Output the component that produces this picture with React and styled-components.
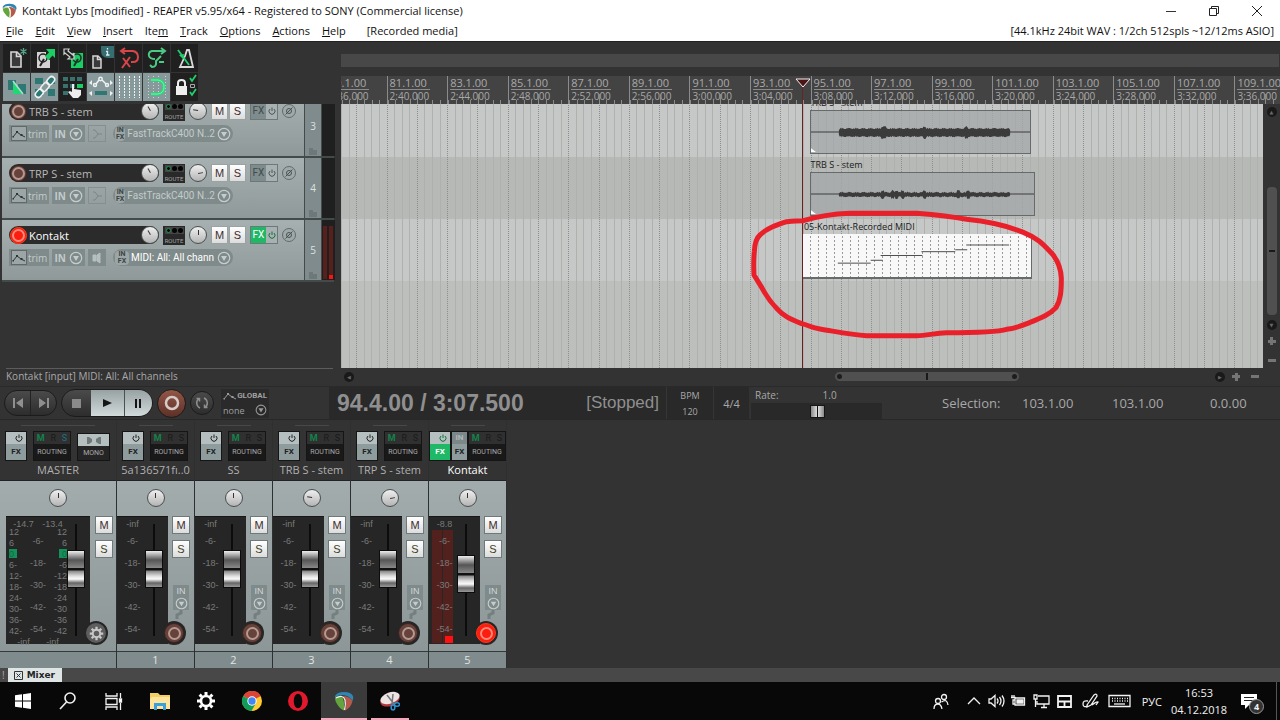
import React from 'react'
import styled, { createGlobalStyle, css } from 'styled-components'

const FIRST_BAR = 79
const BARS = 32

const toPercent = (bar) => `${((bar - FIRST_BAR) / BARS) * 100}%`
const toWidth = (bars) => `${(bars / BARS) * 100}%`

const menus = [
  ['', 'F', 'ile'], ['', 'E', 'dit'], ['', 'V', 'iew'], ['', 'I', 'nsert'], ['Ite', 'm', ''],
  ['', 'T', 'rack'], ['', 'O', 'ptions'], ['', 'A', 'ctions'], ['', 'H', 'elp'],
]

const rulerMarks = Array.from({ length: 16 }, (_, i) => {
  const seconds = 156 + i * 4
  return {
    bar: `${FIRST_BAR + i * 2}.1.00`,
    time: `${Math.floor(seconds / 60)}:${String(seconds % 60).padStart(2, '0')}.000`,
  }
})

const tracks = [
  { id: 3, name: 'TRB S - stem', input: 'FastTrackC400 N..2', pan: -80 },
  { id: 4, name: 'TRP S - stem', input: 'FastTrackC400 N..2', pan: 80 },
  { id: 5, name: 'Kontakt', input: 'MIDI: All: All chann', pan: 0, armed: true },
]

const strips = [
  { id: 1, name: '5a136571fı..0', pan: 0, peak: '-inf', fader: 65 },
  { id: 2, name: 'SS', pan: 0, peak: '-inf', fader: 65 },
  { id: 3, name: 'TRB S - stem', pan: -80, peak: '-inf', fader: 65 },
  { id: 4, name: 'TRP S - stem', pan: 80, peak: '-inf', fader: 65 },
  { id: 5, name: 'Kontakt', pan: 0, peak: '-8.8', fader: 58, armed: true },
]

const notes = [
  [35, 68, 30], [68, 80, 27], [78, 120, 22], [119, 153, 18], [153, 165, 16], [164, 207, 11],
]

function wave(seed, amp, peaks) {
  const top = []
  const bottom = []
  for (let x = 0; x <= 172; x += 1) {
    const noise = Math.abs(Math.sin(x * 1.7 + seed) * Math.cos(x * 0.43 + seed * 2))
    const peak = peaks.some((p) => Math.abs(p - x) < 2) ? 2 : 0
    const edge = x === 0 || x === 172 ? 0.5 : 1
    top.push(`${28 + x},${22 - (amp + noise * 1.6 + peak) * edge}`)
    bottom.unshift(`${28 + x},${23 + (amp + (1 - noise) * 1.4 + peak) * edge}`)
  }
  return [...top, ...bottom].join(' ')
}

/* ---------- icons ---------- */

function ReaperLogo({ size }) {
  return (
    <svg width={size} height={size} viewBox="0 0 20 20">
      <path d="M1 5Q3 1 10 1Q17 1 19 5Q20 7 18.500 10Q15 4 8 4Q4 4 1 7Z" fill="#2e86b5" />
      <path d="M1 7Q4 4 8 6Q11 10 10 19.500Q6 18 3 13Q1 10 1 7Z" fill="#63a53c" />
      <path d="M9 5Q15 5 18.500 10Q17 17 11 19.500Q12.500 10 9 5Z" fill="#b5594c" />
      <path d="M2 7Q9 3 11 9Q12 13 10.500 19" fill="none" stroke="#f0f0ea" strokeWidth="1.200" />
    </svg>
  )
}

function Power({ color = '#222' }) {
  return (
    <svg width="8" height="8" viewBox="0 0 8 8" fill="none" stroke={color}>
      <path d="M2 2A3 3 0 1 0 6 2M4 0.500V4" />
    </svg>
  )
}

function Down({ size = 14, color = '#c5cccc' }) {
  return (
    <svg width={size} height={size} viewBox="0 0 14 14">
      <circle cx="7" cy="7" r="5.700" fill="none" stroke={color} strokeWidth="1.200" />
      <path d="M4 5H10L7 10Z" fill={color} />
    </svg>
  )
}

function Envelope({ color = '#2d3434' }) {
  return (
    <svg width="14" height="10" viewBox="0 0 14 10" stroke={color} fill={color}>
      <path d="M1 8L5 3L9 6L13 8" fill="none" />
      <path d="M4 2H6V4H4ZM8.500 5H10.500V7H8.500ZM0.500 7H2V8.500H0.500Z" stroke="none" />
    </svg>
  )
}

function Gear({ size, color }) {
  return (
    <svg width={size} height={size} viewBox="0 0 20 20" fill="none" stroke={color}>
      <circle cx="10" cy="10" r="5" strokeWidth="2.600" />
      <path
        strokeWidth="3"
        d="M10 1V4M10 16V19M1 10H4M16 10H19M3.600 3.600L5.800 5.800M14.200 14.200L16.400 16.400M3.600 16.400L5.800 14.200M14.200 5.800L16.400 3.600"
      />
    </svg>
  )
}

const toolIcons = [
  { label: 'New project', art: (
    <g fill="none" stroke="#d5d5d5" strokeWidth="1.600">
      <path d="M7 7H13L17 11V22H7Z" fill="#3a3a3a" /><path d="M12.500 7V11.500H17" />
      <path d="M19.500 3V10M16.500 4.500L22.500 8.500M16.500 8.500L22.500 4.500" stroke="#57a88a" strokeWidth="1.300" />
    </g>) },
  { label: 'Open project', art: (
    <g>
      <path d="M5 7H14V13L18 15V23H5Z" fill="#d3d3d3" />
      <circle cx="11" cy="13" r="4" fill="none" stroke="#222" strokeWidth="1.500" />
      <path d="M12 14L8 21" stroke="#222" strokeWidth="2" />
      <path d="M14 4H23V13L20.500 10.500L16.500 15L13 11.500L17 7.500Z" fill="#19ce62" />
    </g>) },
  { label: 'Save project', art: (
    <g>
      <path d="M11 8H23V23H11Z" fill="#19ce62" />
      <circle cx="17" cy="13" r="4" fill="none" stroke="#20352a" strokeWidth="1.600" />
      <path d="M18 14L14 21" stroke="#20352a" strokeWidth="2" />
      <path d="M4 4L9 4L8 6L13 10L14 8V14H8L10 12L5 8L4 9Z" fill="#222" stroke="#d3d3d3" strokeWidth="1.200" />
    </g>) },
  { label: 'Project settings', art: (
    <g fill="none" stroke="#d5d5d5" strokeWidth="1.500">
      <path d="M13 1H26V13H20Q13 13 13 5Z" fill="#356d70" stroke="none" />
      <path d="M19.500 3V4.500M18 6.500H19.500V10M18 10H21.500" stroke="#d8eeee" strokeWidth="1.300" />
      <path d="M5 11H10L13 14V23H5Z" fill="#3a3a3a" /><path d="M9.500 11V14.500H13" />
    </g>) },
  { label: 'Undo', art: (
    <g fill="none" stroke="#d8464a" strokeWidth="2">
      <path d="M9 3L5 6L9 9M5 6H17Q22 7 22 12Q22 17 17 17H15" /><path d="M7 13L14 22M14 12L6 23" />
    </g>) },
  { label: 'Redo', art: (
    <g fill="none" stroke="#4acb83" strokeWidth="2">
      <path d="M17 3L21 6L17 9M21 6H8Q4 7 5 11Q6 14 11 14" />
      <path d="M17 11L12 16Q13 22 8 22L6 20M15 17H20" />
    </g>) },
  { label: 'Metronome', art: (
    <g fill="none" stroke="#dadada" strokeWidth="1.800">
      <path d="M15 5H17L21 22H8L13 11Z" />
      <path d="M6 5L17 20" stroke="#1fd06b" /><path d="M7 10L12 9L11 14Z" fill="#1fd06b" stroke="none" />
    </g>) },
  { label: 'Auto crossfade', on: true, art: (
    <g>
      <path d="M4 6H12V16H4ZM14 10H22V20H14Z" fill="#2e7772" />
      <path d="M9 7L19 20H9Z" fill="#1ed873" /><path d="M9 7L19 20" stroke="#b2ded0" strokeWidth="1.500" />
    </g>) },
  { label: 'Item grouping', on: true, art: (
    <g>
      <path d="M3 4H11V10H3ZM16 4H23V10H16ZM3 15H11V22H3ZM16 15H23V22H16Z" fill="#2e7772" />
      <g transform="rotate(-48 13 13)" fill="none" stroke="#edf2f2" strokeWidth="1.500">
        <rect x="0" y="10" width="9" height="6" rx="3" /><rect x="8" y="10" width="10" height="6" rx="3" />
        <rect x="17" y="10" width="9" height="6" rx="3" />
      </g>
    </g>) },
  { label: 'Ripple editing', art: (
    <g>
      <path d="M3 3H8V7H3ZM10 3H15V7H10ZM17 3H22V7H17ZM3 10H8V14H3ZM3 17H8V21H3ZM10 10H15V14H10Z" fill="#3b716d" />
      <path d="M17 10H23V14H17Z" fill="#19ce62" />
      <path d="M12 10H14V15L21 16V21L18 24H13L8 18L10 17L12 18Z" fill="#ededed" />
    </g>) },
  { label: 'Move envelopes', on: true, art: (
    <g fill="none" stroke="#edf2f2" strokeWidth="1.500">
      <path d="M8 10L11 6M14 6L18 10" /><circle cx="12.500" cy="5" r="1.700" />
      <circle cx="7" cy="11" r="1.500" /><circle cx="19" cy="11" r="1.500" />
      <path d="M7 17H19V21H7Z" fill="#2e7772" stroke="none" />
      <path d="M4 6L1 9L4 11ZM4 17L1 19L4 22ZM22 6L25 9L22 11ZM22 17L25 19L22 22Z" fill="#edf2f2" stroke="none" />
    </g>) },
  { label: 'Grid lines', on: true, art: (
    <path d="M3.500 2V24M8.500 2V24M13.500 2V24M18.500 2V24M23.500 2V24" stroke="#edf2f2" strokeDasharray="2 1" />) },
  { label: 'Snapping', on: true, art: (
    <g fill="none">
      <path d="M4.500 2V24M9.500 2V24M14.500 2V24M21.500 2V24" stroke="#cbd5d5" strokeDasharray="1 2" />
      <path d="M7 6H14Q20 7 20 13Q20 19 14 20H7" stroke="#1fe077" strokeWidth="3" />
      <path d="M7 6H14Q20 7 20 13Q20 19 14 20H7" stroke="#8ff5bb" strokeWidth="0.800" />
    </g>) },
  { label: 'Locking', art: (
    <g fill="none">
      <path d="M4 12H15V21H4Z" fill="#ededed" /><path d="M6 12V9Q6 6 9.500 6Q13 6 13 9V12" stroke="#ededed" strokeWidth="2" />
      <path d="M18 4L20 7L24 1M18 18L20 21L24 15" stroke="#1fd06b" strokeWidth="1.800" />
      <path d="M18.500 10.500H22.500V13.500H18.500Z" stroke="#a8a8a8" />
    </g>) },
]

const stroke = { fill: 'none', stroke: '#f2f2f2', strokeWidth: 1.3 }

const apps = [
  { label: 'Search', narrow: true, art: <g {...stroke} strokeWidth="1.600"><circle cx="12" cy="7" r="5" /><path d="M8.500 11L2 18" /></g> },
  { label: 'Task view', narrow: true, art: (
    <g {...stroke}><path d="M3 2V5H14V2M3 7.500H14V13.500H3ZM3 19V16H14V19M17.500 2V7M17.500 12V19" /><path d="M16.500 8H18.500V11H16.500Z" fill="#fff" /></g>) },
  { label: 'File Explorer', gap: true, art: (
    <g><path d="M0 2H8L10 4H20V18H0Z" fill="#f3cf65" /><path d="M2 6H20V18H0V8Z" fill="#ffe59b" /><path d="M4 19V12H16V19H13V15H7V19Z" fill="#3aa0dc" /></g>) },
  { label: 'Settings', art: <svg width="20" height="20"><Gear size={20} color="#fff" /></svg> },
  { label: 'Chrome', art: (
    <g>
      <circle cx="10" cy="10" r="10" fill="#fc3" />
      <path d="M10 10L1.300 5A10 10 0 0 1 18.700 5Z" fill="#db4437" />
      <path d="M10 10L1.300 5A10 10 0 0 0 9.500 20L14 12Z" fill="#0f9d58" />
      <circle cx="10" cy="10" r="4.700" fill="#fff" /><circle cx="10" cy="10" r="3.700" fill="#4285f4" />
    </g>) },
  { label: 'Opera', art: (
    <g><circle cx="10" cy="10" r="10" fill="#e2192d" /><ellipse cx="10" cy="10" rx="4.300" ry="7.300" fill="#080808" /></g>) },
  { label: 'REAPER', active: true, art: <ReaperLogo size={20} /> },
  { label: 'Snipping Tool', open: true, art: (
    <g>
      <ellipse cx="10" cy="9" rx="10" ry="6" transform="rotate(-20 10 9)" fill="#b5383c" />
      <ellipse cx="10" cy="7" rx="10" ry="5.500" transform="rotate(-20 10 7)" fill="#ece4e3" />
      <path d="M7 4L14 13M13 3L12 13" stroke="#777" strokeWidth="1.500" />
      <g fill="none" stroke="#2c8fd0" strokeWidth="1.600"><ellipse cx="13" cy="16.500" rx="1.800" ry="2.500" /><ellipse cx="17" cy="13.500" rx="2.500" ry="1.800" /></g>
    </g>) },
]

const tray = [
  { label: 'People', w: 16, mr: 18, art: (
    <g {...stroke}><circle cx="5" cy="8" r="2.500" /><path d="M1 16Q1 11 5 11Q8 11 9 16" /><circle cx="11" cy="4" r="2.500" /><path d="M8.500 9Q14 5 15 12" /></g>) },
  { label: 'Show hidden icons', w: 14, mr: 7, art: <path {...stroke} d="M1 11L7 5L13 11" /> },
  { label: 'Volume', w: 17, mr: 5, art: (
    <g {...stroke}><path d="M1 6H3L7 2.500V13.500L3 10H1ZM9 5.500Q11 8 9 10.500M11.500 4Q14.500 8 11.500 12M14 2.500Q18 8 14 13.500" /></g>) },
  { label: 'Battery', w: 16, mr: 7, art: (
    <g {...stroke}><path d="M5 5H14.500V12H5ZM2 2V4M4 2V4M1 4.500H5V7H3V11H5" /><path d="M7 7H13V10H7Z" fill="#f2f2f2" /></g>) },
  { label: 'Network', w: 17, mr: 7, art: (
    <g {...stroke}><path d="M5 3H16V11H4V8M8 14.500H14M11 11V14M1 2H4V6H1ZM2.500 6V14" /></g>) },
  { label: 'Touchpad', w: 15, mr: 10, art: (
    <g {...stroke}><path d="M1 3H14V14H1ZM1 8.500H14M7.500 8.500V14" strokeWidth="1.800" /></g>) },
  { label: 'Windows Ink', w: 17, mr: 9, art: (
    <g {...stroke}><path d="M5 12L12 2Q15 0 15 3L9 12L5 14ZM6 8Q1 7 1 11Q1 15 6 13M10 12Q15 8 16 9Q14 12 14 12" /></g>) },
  { label: 'Touch keyboard', w: 23, mr: 11, art: (
    <g {...stroke}><path d="M1 2.500H22V13.500H1Z" /><path d="M4 5.500H20M4 8H20" strokeDasharray="1 1.500" /><path d="M6 11H17" /></g>) },
]

/* ---------- parts ---------- */

function Knob({ size = 18, angle = 0 }) {
  return (
    <Dial $size={size} aria-label="Pan">
      <DialMark style={{ transform: `rotate(${angle}deg)` }} />
    </Dial>
  )
}

function TrackRow({ track }) {
  const { name, input, pan, armed, id } = track
  return (
    <Row>
      <RowBody>
        <Line>
          <NamePill>
            <Arm $armed={armed} $size={17} aria-label={`Record arm ${name}`} />
            <TrackName $armed={armed}>{name}</TrackName>
            <Knob angle={-30} />
          </NamePill>
          <Route>
            <Dots><i /><i /><i /></Dots>
            ROUTE
          </Route>
          <Knob angle={pan} />
          <Pair>
            <MuteSolo>M</MuteSolo>
            <MuteSolo>S</MuteSolo>
          </Pair>
          <FxPair $on={armed}>
            <button>FX</button>
            <button aria-label="Bypass"><Power color={armed ? '#14703c' : '#4b5555'} /></button>
          </FxPair>
          <Phase aria-label="Phase">
            <svg width="8" height="8" fill="none" stroke="#4a5353"><circle cx="4" cy="4" r="2.500" /><path d="M0.500 7.500L7.500 0.500" /></svg>
          </Phase>
        </Line>
        <SubLine>
          <Chip $width={40}><ChipIcon><Envelope /></ChipIcon>trim</Chip>
          <Chip $width={33} $bold>IN<Down /></Chip>
          <Chip $width={18} $outline={!armed} aria-label="Monitoring">
            <svg width="12" height="12" viewBox="0 0 12 12" fill="none" stroke={armed ? '#b6bfbf' : '#7b8686'}>
              {armed
                ? <path d="M2 3H5V9H2ZM6 3L9 1V11L6 9Z" fill="#b6bfbf" />
                : <path d="M2 2H4L7 6L4 10H2M7 6H11" />}
            </svg>
          </Chip>
          <InputChip $armed={armed}>
            <InFx>IN<br />FX</InFx>
            <span>{input}</span>
            <Down />
          </InputChip>
        </SubLine>
      </RowBody>
      <RowNumber>
        {id}
        <svg width="8" height="7" viewBox="0 0 8 7"><path d="M0 0H4V2H8V7H0Z" fill="#6c7879" /></svg>
      </RowNumber>
      <RowMeter $armed={armed}><b /><b /></RowMeter>
    </Row>
  )
}

function Routing({ solo }) {
  return (
    <RoutingButton>
      <span><b>M</b> <i>R</i> <em data-solo={solo}>S</em></span>
      ROUTING
    </RoutingButton>
  )
}

function Fx({ on }) {
  return (
    <FxButton $on={on}>
      <span><Power color={on ? '#14703c' : '#222'} /></span>
      FX
    </FxButton>
  )
}

function Fader({ value, label }) {
  return <FaderInput type="range" min="0" max="100" defaultValue={value} aria-label={`${label} volume`} />
}

function Scale() {
  return (
    <Marks $line={22}>
      {['-6-', '-18-', '-30-', '-42-', '-54-'].map((m) => <span key={m}>{m}</span>)}
    </Marks>
  )
}

function Master() {
  const marks = ['12', '6', '0', '6', '12', '18', '24', '30', '36', '42']
  return (
    <Strip $width={117}>
      <Head>
        <Grip $wide />
        <HeadButtons $gap={6}>
          <Fx />
          <Routing solo />
          <Mono>
            <span><svg width="16" height="8"><path d="M1 1H3L6 3V6L3 8H1ZM15 1H13L10 3V6L13 8H15Z" fill="#6d7878" /></svg></span>
            MONO
          </Mono>
        </HeadButtons>
        <StripName>MASTER</StripName>
      </Head>
      <StripBody>
        <Knob />
        <Console $pad>
          <Well $width={84}>
            <div>
              <Peak><span>-14.7</span><span>-13.4</span></Peak>
              <MasterScale>
                <Marks $line={11} $align="left">
                  {marks.map((m, i) => <span key={i} data-hot={i === 2}>{m}{i > 2 && '-'}</span>)}
                </Marks>
                <Scale />
                <Marks $line={11} $align="right">
                  {marks.map((m, i) => <span key={i} data-hot={i === 2}>{i > 2 && '-'}{m}</span>)}
                </Marks>
              </MasterScale>
              <Peak $foot><span>-inf</span><span>-inf</span></Peak>
            </div>
            <Fader value={65} label="Master" />
          </Well>
          <Side>
            <Square>M</Square>
            <Square $solo>S</Square>
            <GearButton aria-label="Master settings"><Gear size={15} color="#c9c9c9" /></GearButton>
          </Side>
        </Console>
      </StripBody>
      <StripFoot />
    </Strip>
  )
}

function ChannelStrip({ strip }) {
  const { id, name, pan, peak, fader, armed } = strip
  return (
    <Strip $width={78}>
      <Head>
        <Grip />
        <HeadButtons $gap={armed ? 0 : 6} $flush={armed}>
          <Fx on={armed} />
          {armed && <InputFx><span>IN</span>FX</InputFx>}
          <Routing />
        </HeadButtons>
        <StripName $armed={armed}>{name}</StripName>
      </Head>
      <StripBody>
        <Knob angle={pan} />
        <Console>
          <Well $width={51}>
            <div>
              <Peak>{peak}</Peak>
              <MeterArea $armed={armed}><Scale /></MeterArea>
            </div>
            <Fader value={fader} label={name} />
          </Well>
          <Side>
            <Square>M</Square>
            <Square $solo>S</Square>
            <InBox>IN<Down size={13} /></InBox>
            <Cable width="16" height="9"><path d="M9 0V3L5 5V9" /></Cable>
            <StripArm><Arm $armed={armed} $size={20} aria-label={`Record arm ${name}`} /></StripArm>
          </Side>
        </Console>
      </StripBody>
      <StripFoot>{id}</StripFoot>
    </Strip>
  )
}

function MediaItem({ start, length, label, children, midi }) {
  return (
    <Item style={{ left: toPercent(start), width: toWidth(length) }}>
      <ItemLabel>{label}</ItemLabel>
      <ItemBox $midi={midi}>{children}</ItemBox>
    </Item>
  )
}

function Arrange() {
  return (
    <Canvas>
      <Timeline>
        <Lane $shade="#c5c8c6" />
        <Lane $shade="#b7b9b7" />
        <Lane $shade="#c5c8c6" />
        <Lane $shade="#bdbfbd" $rest />
        <GridLines>
          {Array.from({ length: 128 }, (_, i) => <span key={i} />)}
        </GridLines>
        <Items>
          <LaneItems>
            <MediaItem start={94.97} length={7.3} label="TRB S - stem">
              <svg viewBox="0 0 220 44" preserveAspectRatio="none" width="100%" height="100%">
                <path d="M0 22H220" stroke="#3b3b3b" />
                <polygon points={wave(1, 3, [44, 46, 86, 128])} fill="#3b3b3b" />
                <path d="M0 39L5 43H0Z" fill="#fff" />
              </svg>
            </MediaItem>
          </LaneItems>
          <LaneItems>
            <MediaItem start={94.97} length={7.43} label="TRB S - stem">
              <svg viewBox="0 0 224 44" preserveAspectRatio="none" width="100%" height="100%">
                <path d="M0 22H224" stroke="#3b3b3b" />
                <polygon points={wave(4, 1, [44, 54, 58, 64, 86, 120, 130])} fill="#3b3b3b" />
                <path d="M0 39L5 43H0Z" fill="#fff" />
              </svg>
            </MediaItem>
          </LaneItems>
          <LaneItems>
            <MediaItem start={94.75} length={7.56} label="05-Kontakt-Recorded MIDI" midi>
              <svg viewBox="0 0 229 45" preserveAspectRatio="none" width="100%" height="100%">
                {notes.map(([a, b, y]) => <path key={a} d={`M${a} ${y}.500H${b}`} stroke="#4a4a4a" />)}
              </svg>
            </MediaItem>
          </LaneItems>
        </Items>
        <PlayLine style={{ left: toPercent(94.73) }} />
        <Marker style={{ left: toPercent(92.67) }} viewBox="0 0 1020 750">
          <path d="M190 377C240 362 280 357 330 355L530 355C600 361 640 366 680 373C750 380 800 392 850 412C900 432 915 455 938 478C955 500 963 520 964 550C964 590 962 615 948 638C930 658 905 668 870 682C845 692 830 700 800 703C770 712 700 713 620 713C580 715 560 722 530 722L380 722C330 719 290 710 240 702C215 699 205 690 185 686C150 672 130 663 110 640C85 615 75 595 65 577L42 540Q40 500 43 470C44 445 48 430 60 420C80 400 110 390 140 380Q170 377 190 377Z" />
        </Marker>
      </Timeline>
    </Canvas>
  )
}

export default function App() {
  return (
    <Shell>
      <GlobalStyle />
      <TitleBar>
        <ReaperLogo size={15} />
        <h1>Kontakt Lybs [modified] - REAPER v5.95/x64 - Registered to SONY (Commercial license)</h1>
        <WindowButtons>
          <button aria-label="Minimize"><svg width="12" height="12"><path d="M1 6.500H11" stroke="#333" /></svg></button>
          <button aria-label="Restore">
            <svg width="12" height="12" fill="none" stroke="#222"><path d="M1.500 3.500H8.500V10.500H1.500ZM3.500 3.500V1.500H10.500V8.500H8.500" /></svg>
          </button>
          <button aria-label="Close"><svg width="12" height="12"><path d="M1 1L11 11M11 1L1 11" stroke="#222" /></svg></button>
        </WindowButtons>
      </TitleBar>
      <MenuBar>
        {menus.map(([pre, key, post]) => (
          <button key={pre + key + post}>{pre}<u>{key}</u>{post}</button>
        ))}
        <Recorded>[Recorded media]</Recorded>
        <AudioInfo>[44.1kHz 24bit WAV : 1/2ch 512spls ~12/12ms ASIO]</AudioInfo>
      </MenuBar>

      <Main>
        <LeftPane>
          <Toolbar>
            {toolIcons.map((t) => (
              <Tool key={t.label} aria-label={t.label} $on={t.on}>
                <svg width="26" height="26" viewBox="0 0 26 26">{t.art}</svg>
              </Tool>
            ))}
          </Toolbar>
          <TrackPanel>
            <TrackList>
              {tracks.map((t) => <TrackRow key={t.id} track={t} />)}
            </TrackList>
          </TrackPanel>
          <Status>Kontakt [input] MIDI: All: All channels</Status>
        </LeftPane>

        <RightPane>
          <Navigator />
          <Ruler>
            <RulerMarks>
              {rulerMarks.map((m) => (
                <Mark key={m.bar}>
                  <strong>{m.bar}</strong>
                  <small>{m.time}</small>
                  <Ticks>{Array.from({ length: 8 }, (_, i) => <i key={i} />)}</Ticks>
                </Mark>
              ))}
              <Playhead style={{ left: toPercent(94.75) }} viewBox="0 0 16 26">
                <path d="M7.500 9V26" stroke="#6b2222" />
                <path d="M1 1H15L8 9Z" fill="#4c1515" stroke="#f2f2f2" />
              </Playhead>
            </RulerMarks>
          </Ruler>
          <ArrangeRow>
            <Arrange />
            <VScroll>
              <RoundArrow aria-label="Scroll up">▲</RoundArrow>
              <VTrack><VThumb /></VTrack>
              <RoundArrow aria-label="Scroll down">▼</RoundArrow>
              <Zoom aria-label="Zoom in vertically" $plus />
              <Zoom aria-label="Zoom out vertically" />
            </VScroll>
          </ArrangeRow>
          <HScroll>
            <RoundArrow aria-label="Scroll left">◀</RoundArrow>
            <HTrack><HThumb /></HTrack>
            <RoundArrow aria-label="Scroll right">▶</RoundArrow>
            <Zoom aria-label="Zoom in" $plus />
            <Zoom aria-label="Zoom out" />
          </HScroll>
        </RightPane>
      </Main>

      <Transport>
        <SkipPill>
          <button aria-label="Go to start"><svg width="12" height="10"><path d="M1 0H3V10H1ZM11 0V10L4 5Z" fill="#8f8f8f" /></svg></button>
          <button aria-label="Go to end"><svg width="12" height="10"><path d="M9 0H11V10H9ZM1 0V10L8 5Z" fill="#8f8f8f" /></svg></button>
        </SkipPill>
        <PlayPill>
          <button aria-label="Stop"><svg width="9" height="9"><path d="M0 0H9V9H0Z" fill="#8a8a8a" /></svg></button>
          <button aria-label="Play"><svg width="9" height="8"><path d="M0 0L9 4L0 8Z" fill="#151515" /></svg></button>
          <button aria-label="Pause"><svg width="8" height="9"><path d="M1 0H3V9H1ZM5 0H7V9H5Z" fill="#151515" /></svg></button>
        </PlayPill>
        <RecordButton aria-label="Record"><svg width="16" height="16"><circle cx="8" cy="8" r="6" fill="none" stroke="#d6cbc7" strokeWidth="2.500" /></svg></RecordButton>
        <LoopButton aria-label="Repeat">
          <svg width="14" height="14" viewBox="0 0 14 14" fill="none" stroke="#8f8f8f" strokeWidth="1.500">
            <path d="M5 12A5.500 5.500 0 0 1 4 2.500M9 2A5.500 5.500 0 0 1 10 11.500M1.500 2.500H4.500V5.500M12.500 11.500H9.500V8.500" />
          </svg>
        </LoopButton>
        <GlobalBox>
          <span><Envelope color="#9a9a9a" /> <b>GLOBAL</b></span>
          <span>none <Down size={12} color="#9a9a9a" /></span>
        </GlobalBox>
        <TimeBox>
          <strong>94.4.00 / 3:07.500</strong>
          <span>[Stopped]</span>
        </TimeBox>
        <Cell $width={47}><span>BPM</span><span>120</span></Cell>
        <Cell $width={36} $big>4/4</Cell>
        <RateBox>
          <label htmlFor="rate"><span>Rate:</span><span>1.0</span></label>
          <input id="rate" type="range" min="0" max="100" defaultValue="51" />
        </RateBox>
        <Selection>
          <span>Selection:</span>
          <span>103.1.00</span>
          <span>103.1.00</span>
          <span>0.0.00</span>
        </Selection>
      </Transport>

      <Mixer>
        <Master />
        {strips.map((s) => <ChannelStrip key={s.id} strip={s} />)}
      </Mixer>

      <TabBar>
        <span>!</span>
        <Tab>
          <svg width="9" height="9" fill="none" stroke="#333"><path d="M0.500 0.500H8.500V8.500H0.500ZM2.500 2.500L6.500 6.500M6.500 2.500L2.500 6.500" /></svg>
          Mixer
        </Tab>
      </TabBar>

      <Taskbar>
        <AppButton aria-label="Start" $narrow>
          <svg width="16" height="16" viewBox="0 0 16 16"><path d="M0 2.300L7 1.300V7.500H0ZM8 1.200L16 0V7.500H8ZM0 8.500H7V14.700L0 13.700ZM8 8.500H16V16L8 14.800Z" fill="#fff" /></svg>
        </AppButton>
        {apps.map((a) => (
          <AppButton key={a.label} aria-label={a.label} $narrow={a.narrow} $gap={a.gap} $active={a.active} $open={a.open}>
            <svg width="20" height="20" viewBox="0 0 20 20">{a.art}</svg>
          </AppButton>
        ))}
        <Tray>
          {tray.map((t) => (
            <TrayButton key={t.label} aria-label={t.label} $after={t.mr}>
              <svg width={t.w} height="16">{t.art}</svg>
            </TrayButton>
          ))}
          <Lang>РУС</Lang>
          <Clock><span>16:53</span><span>04.12.2018</span></Clock>
          <Notify aria-label="Notifications">
            <svg width="16" height="16"><path d="M0 1H16V12H8L4 16V12H0Z" fill="#fff" /><path d="M3 4.500H13M3 7.500H13" stroke="#222" /></svg>
            <b>4</b>
          </Notify>
        </Tray>
      </Taskbar>
    </Shell>
  )
}

/* ---------- styles ---------- */

const GlobalStyle = createGlobalStyle`
  * { box-sizing: border-box; }
  body {
    margin: 0;
    background: #333;
    font-family: "Open Sans", "Noto Sans", sans-serif;
    font-size: 11px;
  }
  button {
    margin: 0;
    padding: 0;
    border: none;
    background: none;
    color: inherit;
    font: inherit;
  }
  h1 { margin: 0; }
  svg { display: block; flex: none; }
`

const Shell = styled.div`
  display: flex;
  flex-direction: column;
  min-height: 100vh;
  background: #333;
  color: #a8a8a8;
`

const TitleBar = styled.header`
  display: flex;
  align-items: center;
  gap: 5px;
  height: 21px;
  padding-left: 2px;
  background: #fff;
  color: #111;

  h1 {
    flex: 1;
    font-size: 11px;
    font-weight: 400;
  }
`

const WindowButtons = styled.div`
  display: flex;
  padding-right: 2px;

  button {
    display: flex;
    justify-content: center;
    width: 43px;
  }
`

const MenuBar = styled.nav`
  display: flex;
  align-items: center;
  gap: 12px;
  height: 20px;
  padding: 0 6px 2px;
  background: #fff;
  color: #111;
  font-size: 11px;
`

const Recorded = styled.span`
  margin-left: 9px;
`

const AudioInfo = styled.span`
  margin-left: auto;
`

const Main = styled.main`
  display: grid;
  grid-template-columns: 341px 1fr;
  flex: 1;
  min-height: 345px;
  border-top: 1px solid #222;
`

const LeftPane = styled.section`
  display: flex;
  flex-direction: column;
`

const Toolbar = styled.div`
  display: grid;
  grid-template-columns: repeat(7, 27px);
  grid-auto-rows: 28px;
  gap: 1px;
  padding: 2px 0 3px 3px;
`

const Tool = styled.button`
  display: flex;
  align-items: center;
  justify-content: center;
  background: ${({ $on }) => ($on ? '#87999b' : '#202020')};
`

const TrackPanel = styled.div`
  flex: 1;
  overflow: hidden;
  padding-left: 2px;
`

const TrackList = styled.div`
  margin-top: -8px;
`

const Row = styled.div`
  display: grid;
  grid-template-columns: 302px 16px 13px;
  gap: 1px;
  height: 62px;
  border-bottom: 2px solid #434a4a;
  width: 332px;
  background: #434a4a;
`

const RowBody = styled.div`
  padding: 5px 7px;
  background: linear-gradient(#a7b0b0, #8f9999);
`

const Line = styled.div`
  display: flex;
  align-items: center;
  height: 20px;
  gap: 4px;
`

const NamePill = styled.div`
  display: flex;
  align-items: center;
  width: 150px;
  height: 18px;
  padding: 0 0 0 1px;
  border-radius: 10px;
  background: #2b2b2b;
`

const Arm = styled.button`
  display: flex;
  align-items: center;
  justify-content: center;
  flex: none;
  width: ${({ $size }) => $size}px;
  height: ${({ $size }) => $size}px;
  border-radius: 50%;
  background: ${({ $armed }) => ($armed ? '#fb1d10' : '#67423b')};
  border: 1px solid ${({ $armed }) => ($armed ? '#ff3a1a' : '#3a2420')};

  &::before {
    content: '';
    width: 9px;
    height: 9px;
    border: 2px solid ${({ $armed }) => ($armed ? '#ff8a78' : '#b59a93')};
    border-radius: 50%;
  }
`

const TrackName = styled.span`
  flex: 1;
  padding-left: 2px;
  color: ${({ $armed }) => ($armed ? '#fff' : '#b8b8b8')};
`

const Dial = styled.button`
  display: flex;
  flex: none;
  width: ${({ $size }) => $size}px;
  height: ${({ $size }) => $size}px;
  border: 1px solid #4a4f4f;
  border-radius: 50%;
  background: linear-gradient(#efefef, #b4b4b4);
`

const DialMark = styled.i`
  flex: 1;
  background: linear-gradient(#333, #333) center 3px / 1px 5px no-repeat;
`

const Route = styled.button`
  display: flex;
  flex-direction: column;
  align-items: center;
  justify-content: space-between;
  width: 22px;
  height: 19px;
  padding: 1px 1px 0;
  background: #292929;
  color: #a5a5a5;
  font: 6px/9px Roboto, sans-serif;
`

const Dots = styled.span`
  display: flex;
  gap: 1px;
  padding: 1px;
  background: #454545;

  i {
    width: 5px;
    height: 5px;
    border-radius: 50%;
    background: #050505;
  }
  i:first-child {
    border: 1px solid #1b9355;
  }
`

const Pair = styled.div`
  display: flex;
  gap: 1px;
`

const MuteSolo = styled.button`
  width: 17px;
  height: 18px;
  border: 1px solid #9aa2a2;
  background: linear-gradient(#fff, #dcdcdc);
  color: #3f2c2c;
  font: 11px "Liberation Sans", sans-serif;
`

const FxPair = styled.div`
  display: flex;
  width: 28px;
  height: 18px;
  border: 1px solid #6d7979;
  color: ${({ $on }) => ($on ? '#fff' : '#414b4b')};
  font: 10px/16px Roboto, sans-serif;

  button {
    display: flex;
    align-items: center;
    justify-content: center;
    width: 11px;
    background: #a7b1b1;
  }
  button:first-child {
    width: 15px;
    background: ${({ $on }) => ($on ? '#1fb866' : '#7f8c8d')};
  }
`

const Phase = styled.button`
  display: flex;
  align-items: center;
  justify-content: center;
  width: 14px;
  height: 14px;
  border: 1px solid #616b6b;
  border-radius: 50%;
  background: #a0a9a9;
`

const SubLine = styled.div`
  display: flex;
  gap: 3px;
  margin-top: 4px;
`

const Chip = styled.button`
  display: flex;
  align-items: center;
  justify-content: space-around;
  width: ${({ $width }) => $width}px;
  height: 17px;
  border: 1px solid ${({ $outline }) => ($outline ? '#858f8f' : 'transparent')};
  background: ${({ $outline }) => ($outline ? 'none' : '#7f8a8a')};
  color: #c3caca;
  font-size: 10px;
  font-weight: ${({ $bold }) => ($bold ? 700 : 400)};
`

const ChipIcon = styled.span`
  display: flex;
  align-items: center;
  height: 15px;
  border: 1px solid #5f6969;
  background: #9da6a6;
`

const InputChip = styled.button`
  display: flex;
  align-items: center;
  gap: 2px;
  width: 120px;
  height: 17px;
  margin-left: 4px;
  padding: 0 2px;
  border-radius: 9px;
  background: #7f8a8a;
  color: ${({ $armed }) => ($armed ? '#fff' : '#c3caca')};
  font: 10px Roboto, sans-serif;

  > span:nth-child(2) {
    flex: 1;
    white-space: nowrap;
    text-align: left;
  }
`

const InFx = styled.span`
  width: 14px;
  border-radius: 4px;
  background: #9da6a6;
  color: #3c4444;
  font: bold 7px/7px Roboto, sans-serif;
`

const RowNumber = styled.div`
  display: flex;
  flex-direction: column;
  align-items: center;
  justify-content: flex-end;
  gap: 15px;
  padding-bottom: 1px;
  background: #7f8b8c;
  color: #dde2e2;
  font-size: 10px;
`

const RowMeter = styled.div`
  display: flex;
  align-items: flex-end;
  gap: 2px;
  padding: 6px 1px 1px;
  background: #1f1f1f;

  b {
    width: 4px;
    height: 100%;
    background: ${({ $armed }) => ($armed ? '#56211d' : 'none')};
  }
  b:last-child {
    border-bottom: ${({ $armed }) => ($armed ? '4px solid #f11' : 'none')};
  }
`

const Status = styled.div`
  height: 18px;
  margin: 0 8px 0 6px;
  border-top: 1px solid #5c5c5c;
  color: #a9a9a9;
  font-size: 10px;
  line-height: 15px;
`

const RightPane = styled.section`
  display: flex;
  flex-direction: column;
  min-width: 0;
`

const Navigator = styled.div`
  height: 13px;
  margin: 12px 1px 9px 0;
  background: #484848;
`

const Ruler = styled.div`
  height: 28px;
  overflow: hidden;
  background: #434343;
`

const RulerMarks = styled.div`
  position: relative;
  display: grid;
  grid-template-columns: repeat(16, 1fr);
  height: 28px;
  margin: 0 -15px;
`

const Mark = styled.div`
  position: relative;
  display: flex;
  flex-direction: column;
  padding-left: 2px;
  border-left: 1px solid #8b8b8b;
  color: #a9a9a9;
  white-space: nowrap;

  strong {
    width: 40px;
    height: 14px;
    border-bottom: 1px solid #8b8b8b;
    font-size: 11px;
    font-weight: 400;
    line-height: 14px;
  }
  small {
    font-size: 10px;
    line-height: 13px;
  }
`

const Ticks = styled.div`
  position: absolute;
  inset: auto 0 0 0;
  display: grid;
  grid-template-columns: repeat(8, 1fr);
  align-items: end;

  i {
    height: 4px;
    border-left: 1px solid #8b8b8b;
  }
  i:nth-child(5) {
    height: 10px;
  }
`

const Playhead = styled.svg`
  position: absolute;
  top: 2px;
  width: 16px;
  height: 26px;
  margin-left: -8px;
`

const ArrangeRow = styled.div`
  display: flex;
  flex: 1;
`

const Canvas = styled.div`
  position: relative;
  flex: 1;
  overflow: hidden;
`

const Timeline = styled.div`
  position: absolute;
  inset: -9px -32px 0 -15px;
  display: flex;
  flex-direction: column;
`

const Lane = styled.div`
  height: 62px;
  background: ${({ $shade }) => $shade};
  ${({ $rest }) => $rest && css`flex: 1;`}
`

const GridLines = styled.div`
  position: absolute;
  inset: 0;
  display: grid;
  grid-template-columns: repeat(128, 1fr);

  span {
    border-left: 1px solid #afb1af;
  }
  span:nth-child(4n + 1) {
    border-left: 1px dotted #8c8e8c;
  }
`

const Items = styled.div`
  position: absolute;
  inset: 0;
`

const LaneItems = styled.div`
  position: relative;
  height: 62px;
`

const Item = styled.div`
  position: absolute;
  top: 1px;
`

const ItemLabel = styled.div`
  height: 14px;
  padding-left: 1px;
  color: #191919;
  font-size: 9px;
  line-height: 14px;
  white-space: nowrap;
`

const ItemBox = styled.div`
  height: 44px;
  border: 1px solid #666a6a;
  background: #a5a9aacc;

  ${({ $midi }) => $midi && css`
    height: 45px;
    border-width: 0 1px 2px 0;
    background: repeating-linear-gradient(#f8f8f8 0 2px, transparent 2px 4px),
      repeating-linear-gradient(to right, #f8f8f8 0 7px, #999 7px 8px);
  `}
`

const PlayLine = styled.div`
  position: absolute;
  top: 0;
  bottom: 0;
  border-left: 1px solid #6b1e1e;
`

const Marker = styled.svg`
  position: absolute;
  top: 0;
  width: 340px;
  height: 250px;
  fill: none;
  stroke: #e9202a;
  stroke-width: 15px;
`

const VScroll = styled.div`
  display: flex;
  flex-direction: column;
  align-items: center;
  gap: 3px;
  width: 17px;
  padding-top: 3px;
`

const RoundArrow = styled.button`
  flex: none;
  width: 10px;
  height: 10px;
  border-radius: 50%;
  background: #191919;
  color: #686868;
  font: 5px/10px "DejaVu Sans", sans-serif;
`

const VTrack = styled.div`
  display: flex;
  flex: 1;
  padding: 67px 0 2px;
`

const VThumb = styled.div`
  width: 10px;
  border-radius: 4px;
  background: linear-gradient(#191919, #191919) center / 6px 2px no-repeat, #505050;
`

const Zoom = styled.button`
  flex: none;
  width: 16px;
  height: 16px;
  background:
    linear-gradient(#757575, #757575) center / 8px 3px no-repeat
    ${({ $plus }) => $plus && ', linear-gradient(#757575, #757575) center / 3px 8px no-repeat'};
`

const HScroll = styled.div`
  display: flex;
  align-items: center;
  gap: 3px;
  height: 18px;
  padding: 0 17px 1px 3px;
`

const HTrack = styled.div`
  flex: 1;
  padding: 0 21% 0 52%;
`

const HThumb = styled.div`
  display: flex;
  justify-content: space-between;
  padding: 2px;
  border-radius: 5px;
  height: 9px;
  background: linear-gradient(#191919, #191919) center / 2px 7px no-repeat, #505050;

  &::before,
  &::after {
    content: '';
    width: 5px;
    height: 5px;
    border-radius: 50%;
    background: #1d1d1d;
  }
`

const Transport = styled.section`
  display: flex;
  align-items: center;
  height: 34px;
  padding-left: 4px;
  border-top: 1px solid #2a2a2a;
  border-bottom: 1px solid #282828;
`

const Pill = styled.div`
  display: flex;
  border: 1px solid #1b1b1b;
  border-radius: 15px;
  overflow: hidden;
  background: linear-gradient(#4a4a4a, #2d2d2d);

  button {
    display: flex;
    align-items: center;
    justify-content: center;
  }
`

const SkipPill = styled(Pill)`
  width: 53px;
  height: 26px;

  button {
    flex: 1;
  }
  button + button {
    border-left: 1px solid #222;
  }
`

const PlayPill = styled(Pill)`
  width: 92px;
  height: 28px;
  margin-left: 4px;

  button {
    width: 30px;
  }
  button:nth-child(2) {
    width: 34px;
    background: linear-gradient(#97a2a2, #d2dada);
    border-right: 1px solid #4b5151;
  }
  button:nth-child(3) {
    width: 28px;
    background: linear-gradient(#97a2a2, #d2dada);
  }
`

const RoundButton = styled.button`
  display: flex;
  align-items: center;
  justify-content: center;
  border: 1px solid #1b1b1b;
  border-radius: 50%;
`

const RecordButton = styled(RoundButton)`
  width: 29px;
  height: 29px;
  margin-left: 4px;
  background: linear-gradient(#925747, #5d3026);
`

const LoopButton = styled(RoundButton)`
  width: 24px;
  height: 24px;
  margin-left: 4px;
  background: linear-gradient(#4a4a4a, #2d2d2d);
`

const GlobalBox = styled.div`
  display: flex;
  flex-direction: column;
  justify-content: space-around;
  width: 48px;
  height: 29px;
  margin-left: 7px;
  padding: 0 1px;
  background: #2a2a2a;
  color: #a0a0a0;
  font-size: 9px;

  span {
    display: flex;
    align-items: center;
    justify-content: space-between;
    height: 13px;
    padding: 0 1px;
  }
  b {
    font: bold 8px Roboto, sans-serif;
  }
`

const TimeBox = styled.div`
  display: flex;
  align-items: center;
  justify-content: space-between;
  width: 337px;
  height: 32px;
  margin-left: 60px;
  padding: 0 7px 0 8px;
  background: #292929;
  color: #8f8f8f;
  font: 17px "Liberation Sans", sans-serif;

  strong {
    font-size: 23px;
  }
`

const Cell = styled.div`
  display: flex;
  flex-direction: column;
  align-items: center;
  justify-content: space-around;
  width: ${({ $width }) => $width}px;
  height: 32px;
  border-left: 1px solid #363636;
  background: #292929;
  font-size: ${({ $big }) => ($big ? 11 : 9)}px;
`

const RateBox = styled.div`
  width: 131px;
  height: 32px;
  margin-left: 2px;
  font-size: 10px;

  label {
    display: flex;
    gap: 44px;
    height: 16px;
    padding: 0 4px;
    line-height: 16px;
  }
  input {
    display: block;
    appearance: none;
    width: 100%;
    height: 16px;
    margin: 0;
    background: #292929;
  }
  input::-webkit-slider-thumb {
    appearance: none;
    width: 15px;
    height: 13px;
    border: 1px solid #151515;
    background: linear-gradient(to right, #888, #ddd 6px, #111 6px 7px, #ddd 7px, #888);
  }
`

const Selection = styled.div`
  display: grid;
  grid-template-columns: 80px 90px 98px 70px;
  flex: 1;
  justify-content: end;
  font-size: 13px;
`

const Mixer = styled.section`
  display: flex;
  height: 248px;
`

const Strip = styled.article`
  display: flex;
  flex-direction: column;
  width: ${({ $width }) => $width}px;
  border-right: 1px solid #2c3030;
`

const Head = styled.div`
  display: flex;
  flex-direction: column;
  align-items: center;
  height: 61px;
  padding-top: 5px;
  border-bottom: 1px solid #222;
`

const Grip = styled.div`
  width: ${({ $wide }) => ($wide ? 74 : 34)}px;
  border-top: 1px solid #484848;
`

const HeadButtons = styled.div`
  display: flex;
  align-self: stretch;
  gap: ${({ $gap }) => $gap}px;
  margin-top: 5px;
  padding-left: ${({ $flush }) => ($flush ? 0 : 5)}px;
`

const HeadButton = styled.button`
  display: flex;
  flex-direction: column;
  flex: none;
  height: 30px;
  border: 1px solid #151515;
  background: #8f9c9d;
  color: #1d2222;
  font: bold 8px/16px Roboto, sans-serif;

  > span {
    display: flex;
    align-items: center;
    height: 12px;
    align-self: stretch;
  }
`

const FxButton = styled(HeadButton)`
  width: 22px;
  padding: 0 1px;
  background: ${({ $on }) => ($on ? '#1fb866' : '#8f9c9d')};
  color: ${({ $on }) => ($on ? '#fff' : '#1d2222')};

  > span {
    justify-content: flex-end;
    margin: 0 -1px;
    padding-right: 3px;
    background: #b5bfbf;
  }
`

const InputFx = styled(HeadButton)`
  align-items: center;
  width: 17px;

  > span {
    justify-content: center;
    background: #7b8788;
    color: #aeb8b8;
  }
`

const RoutingButton = styled(HeadButton)`
  align-items: center;
  width: 38px;
  background: #191919;
  color: #aaa;
  font: 7px/16px Roboto, sans-serif;

  > span {
    justify-content: space-around;
    background: #303030;
    color: #1a1a1a;
    font-size: 9px;
  }
  b {
    color: #12834a;
  }
  i,
  em {
    font-style: normal;
  }
  em[data-solo='true'] {
    color: #206f80;
  }
`

const Mono = styled(HeadButton)`
  align-items: center;
  width: 33px;
  height: 28px;
  margin-top: 2px;
  background: #252525;
  color: #aaa;
  font: 7px/14px Roboto, sans-serif;

  > span {
    justify-content: center;
    background: #b5bfbf;
  }
`

const StripName = styled.span`
  margin-top: 1px;
  color: ${({ $armed }) => ($armed ? '#fff' : '#b0b0b0')};
  line-height: 16px;
  white-space: nowrap;
`

const StripBody = styled.div`
  display: flex;
  flex-direction: column;
  align-items: center;
  flex: 1;
  gap: 9px;
  padding-top: 8px;
  background: linear-gradient(#a3acad, #8d9798);
`

const Console = styled.div`
  display: flex;
  align-self: stretch;
  gap: ${({ $pad }) => ($pad ? 5 : 4)}px;
  padding-left: ${({ $pad }) => ($pad ? 6 : 0)}px;
`

const Well = styled.div`
  display: flex;
  justify-content: space-between;
  width: ${({ $width }) => $width}px;
  height: 128px;
  padding: 1px 5px 0 3px;
  border-top: 1px solid #171717;
  background: #262626;
  color: #7a7a7a;
  font: 9px "Liberation Sans", sans-serif;

  > div {
    flex: 1;
    min-width: 0;
  }
`

const Peak = styled.div`
  display: flex;
  justify-content: space-around;
  height: 12px;
  line-height: 12px;
  margin-top: ${({ $foot }) => ($foot ? -4 : 0)}px;
  white-space: nowrap;
`

const MasterScale = styled.div`
  display: grid;
  grid-template-columns: 1fr 1fr 1fr;
`

const Marks = styled.div`
  display: flex;
  flex-direction: column;
  margin-top: ${({ $align }) => ($align ? -3 : 0)}px;
  text-align: ${({ $align }) => $align || 'center'};

  span {
    height: ${({ $line }) => $line}px;
    line-height: ${({ $line }) => $line}px;
  }
  span[data-hot='true'] {
    align-self: ${({ $align }) => ($align === 'right' ? 'flex-end' : 'flex-start')};
    width: 8px;
    height: 9px;
    margin-bottom: 2px;
    background: #16905a;
    color: #0e6a40;
  }
`

const MeterArea = styled.div`
  height: 113px;
  background: ${({ $armed }) => ($armed
    ? 'linear-gradient(#f11, #f11) 13px 106px / 8px 7px no-repeat, linear-gradient(to right, #53211d 0 10px, #262626 10px 11px, #53211d 11px 21px, transparent 21px)'
    : 'none')};
`

const FaderInput = styled.input`
  appearance: none;
  flex: none;
  width: 18px;
  height: 112px;
  margin: 6px 0 0;
  background: linear-gradient(#0c0c0c, #0c0c0c) center / 2px 100% no-repeat;
  writing-mode: vertical-lr;
  direction: rtl;

  &::-webkit-slider-thumb {
    appearance: none;
    width: 18px;
    height: 38px;
    border: 1px solid #0c0c0c;
    background: linear-gradient(#eee, #999 5px, #555 9px, #888 17px, #111 17px 19px, #888 20px, #ddd 25px, #fafafa 28px, #666 32px, #999);
  }
`

const Side = styled.div`
  display: flex;
  flex-direction: column;
  width: 20px;
  height: 129px;
`

const Square = styled.button`
  width: 18px;
  height: 18px;
  margin-bottom: 6px;
  border: 1px solid #6f7979;
  background: linear-gradient(#fff, #dcdcdc);
  color: ${({ $solo }) => ($solo ? '#3c4320' : '#3f2c2c')};
  font: 11px/16px "Liberation Sans", sans-serif;
`

const InBox = styled.button`
  display: flex;
  flex-direction: column;
  align-items: center;
  width: 16px;
  height: 25px;
  margin: 21px 0 0 1px;
  background: #7f8a8b;
  color: #d0d6d6;
  font: 9px/12px "Liberation Sans", sans-serif;
`

const Cable = styled.svg`
  fill: none;
  stroke: #747f80;
  stroke-width: 3px;
`

const StripArm = styled.div`
  width: 24px;
  height: 24px;
  margin: auto 0 0 -10px;
  padding: 2px;
  border-radius: 50%;
  background: #262626;
`

const GearButton = styled.button`
  display: flex;
  align-items: center;
  justify-content: center;
  width: 24px;
  height: 24px;
  margin: auto 0 0 -11px;
  border: 2px solid #262626;
  border-radius: 50%;
  background: #5d5d5d;
`

const StripFoot = styled.footer`
  height: 17px;
  border-top: 1px solid #333a3a;
  background: #7f8b8c;
  color: #e0e4e4;
  line-height: 15px;
  text-align: center;
`

const TabBar = styled.div`
  display: flex;
  gap: 3px;
  height: 14px;
  padding-left: 2px;
  background: #484848;
  font-size: 10px;
  line-height: 14px;
`

const Tab = styled.button`
  display: flex;
  align-items: center;
  gap: 4px;
  padding: 0 7px 0 6px;
  background: #dfe5e5;
  color: #252525;
  font: bold 9px "DejaVu Sans", sans-serif;
`

const Taskbar = styled.footer`
  display: flex;
  align-items: center;
  height: 38px;
  background: #080808;
  color: #f2f2f2;
`

const AppButton = styled.button`
  display: flex;
  align-items: center;
  justify-content: center;
  width: ${({ $narrow }) => ($narrow ? 45 : 46)}px;
  height: 38px;
  margin-left: ${({ $gap }) => ($gap ? 2 : 0)}px;
  background: ${({ $active, $open }) => {
    if ($active) return 'linear-gradient(#f5a8bc, #f5a8bc) bottom / 100% 2px no-repeat, #3b3b3b'
    return $open ? 'linear-gradient(#f5a8bc, #f5a8bc) bottom / 38px 2px no-repeat' : 'none'
  }};
`

const Tray = styled.div`
  display: flex;
  align-items: center;
  height: 38px;
  margin-left: auto;
  padding-right: 12px;
  margin-right: 3px;
  border-right: 1px solid #555;
`

const TrayButton = styled.button`
  margin-right: ${({ $after }) => $after}px;
`

const Lang = styled.button`
  font-size: 11px;
`

const Clock = styled.time`
  display: flex;
  flex-direction: column;
  align-items: center;
  width: 60px;
  margin: 0 12px 0 7px;
  font-size: 11px;
  line-height: 17px;
`

const Notify = styled.button`
  position: relative;
  width: 23px;
  height: 16px;

  b {
    position: absolute;
    left: 8px;
    top: 6px;
    width: 15px;
    height: 15px;
    border: 1px solid #999;
    border-radius: 50%;
    background: #333;
    font-size: 9px;
    line-height: 13px;
  }
`
